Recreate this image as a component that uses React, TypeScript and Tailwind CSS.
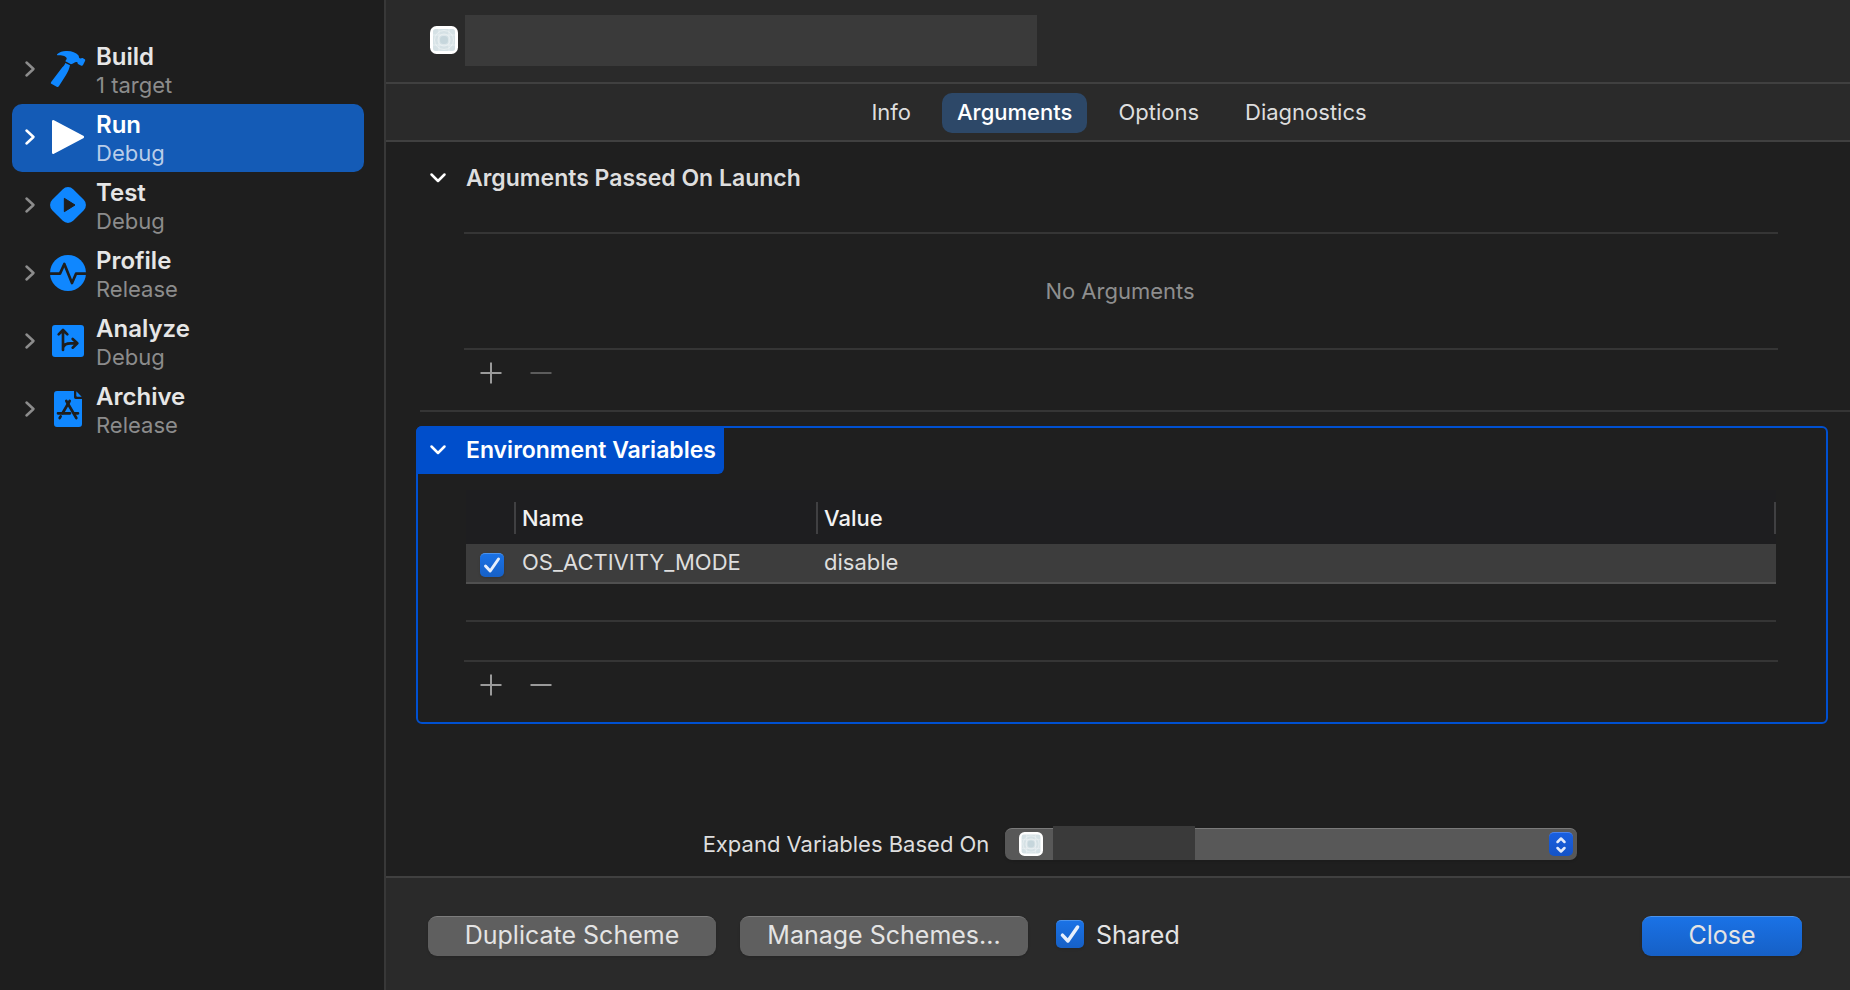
import { useId, type ReactNode } from "react";

const BLUE = "#0f87ff";
const DARK = "#1e1e1e";

function HammerIcon() {
  return (
    <svg viewBox="0 0 108 120" className="h-10 w-9" fill={BLUE} aria-hidden="true">
      <path d="M22 15C30 8 40 5 52 6C66 6 78 11 85 19C87 22 86 26 89 28C93 29 96 26 99 28L104 31C106 32 106 34 105 36L99 48C98 50 96 51 94 50L84 45C82 43 84 40 80 39C75 38 70 44 63 46L46 37C47 34 51 31 50 28C48 21 36 18 24 19C21 19 20 17 22 15Z" />
      <path d="M46 42L60 49C58 60 54 68 48 78L27 111C25 114 23 115 20 113L4 104C2 103 2 101 4 98L37 55C42 50 44 47 46 42Z" />
    </svg>
  );
}

function PlayIcon() {
  return (
    <svg viewBox="0 0 96 102" className="h-[34px] w-8" aria-hidden="true">
      <path d="M4 4L92 51L4 98Z" fill="white" stroke="white" strokeWidth="8" strokeLinejoin="round" />
    </svg>
  );
}

function TestIcon() {
  return (
    <svg viewBox="0 0 108 108" className="size-9" aria-hidden="true">
      <rect x="9.5" y="9.5" width="89" height="89" rx="22" fill={BLUE} transform="rotate(45 54 54)" />
      <path d="M43 34L75 54L43 74Z" fill={DARK} stroke={DARK} strokeWidth="3" strokeLinejoin="round" />
    </svg>
  );
}

function ProfileIcon() {
  return (
    <svg viewBox="0 0 108 108" className="size-9" aria-hidden="true">
      <circle cx="54" cy="54" r="54" fill={BLUE} />
      <path d="M0 56H30L43 27L66 84L78 56H108" fill="none" stroke={DARK} strokeWidth="8" strokeLinejoin="round" />
    </svg>
  );
}

function AnalyzeIcon() {
  return (
    <svg viewBox="0 0 96 96" className="size-8" aria-hidden="true">
      <rect width="96" height="96" rx="9" fill={BLUE} />
      <path
        d="M33 75V17M20 28L33 15L46 28M33 68C36 58 44 55 56 55H75M62 42L76 55L62 68"
        fill="none"
        stroke={DARK}
        strokeWidth="8"
        strokeLinecap="round"
        strokeLinejoin="round"
      />
    </svg>
  );
}

function ArchiveIcon() {
  return (
    <svg viewBox="0 0 84 108" className="h-9 w-7" aria-hidden="true">
      <path d="M9 0H60V19Q60 24 65 24H84V99Q84 108 75 108H9Q0 108 0 99V9Q0 0 9 0Z" fill={BLUE} />
      <path d="M67 1L83 17H70Q67 17 67 14Z" fill={BLUE} />
      <g fill="none" stroke={DARK} strokeWidth="8" strokeLinecap="round">
        <path d="M47 30L26 66" />
        <path d="M37 30L67 81" />
        <path d="M12 67H48M60 67H72" />
        <path d="M17 81L20 76" />
      </g>
    </svg>
  );
}

function AppIcon({ className }: { className: string }) {
  return (
    <svg viewBox="0 0 28 28" className={className} aria-hidden="true">
      <rect width="28" height="28" rx="6.5" fill="#ffffff" />
      <rect x="3" y="3" width="22" height="22" rx="2.5" fill="#d5e1e5" />
      <g fill="none" stroke="#eef4f5" strokeWidth="0.7">
        <circle cx="14" cy="14" r="9.5" />
        <circle cx="14" cy="14" r="6" />
        <path d="M3 9H25M3 19H25M9 3V25M19 3V25" />
      </g>
      <circle cx="14" cy="14" r="4" fill="#c6d6dc" />
    </svg>
  );
}

function ChevronRight() {
  return (
    <svg viewBox="0 0 12 18" className="h-[18px] w-3 shrink-0" aria-hidden="true">
      <path d="M2.500 2.500L9.500 9L2.500 15.500" fill="none" stroke="currentColor" strokeWidth="2.500" strokeLinecap="round" strokeLinejoin="round" />
    </svg>
  );
}

function ChevronDown() {
  return (
    <svg viewBox="0 0 18 12" className="h-3 w-[18px] shrink-0" aria-hidden="true">
      <path d="M2.500 2.500L9 9L15.500 2.500" fill="none" stroke="currentColor" strokeWidth="2.500" strokeLinecap="round" strokeLinejoin="round" />
    </svg>
  );
}

type Phase = { name: string; detail: string; icon: ReactNode; selected?: boolean };

const phases: Phase[] = [
  { name: "Build", detail: "1 target", icon: <HammerIcon /> },
  { name: "Run", detail: "Debug", icon: <PlayIcon />, selected: true },
  { name: "Test", detail: "Debug", icon: <TestIcon /> },
  { name: "Profile", detail: "Release", icon: <ProfileIcon /> },
  { name: "Analyze", detail: "Debug", icon: <AnalyzeIcon /> },
  { name: "Archive", detail: "Release", icon: <ArchiveIcon /> },
];

function PhaseRow({ name, detail, icon, selected }: Phase) {
  return (
    <li>
      <button
        type="button"
        aria-current={selected}
        className={
          selected
            ? "flex h-[68px] w-full items-center rounded-[10px] bg-[#145bb6] pl-3 text-left text-white"
            : "flex h-[68px] w-full items-center rounded-[10px] pl-3 text-left text-[#8c8c8c]"
        }
      >
        <span className="flex items-center pb-0.5">
          <ChevronRight />
          <span className="ml-3 flex w-10 shrink-0 justify-center">{icon}</span>
        </span>
        <span className="ml-2 flex flex-col pt-0.5">
          <span className={selected ? "text-2xl leading-7 font-semibold text-white" : "text-2xl leading-7 font-semibold text-[#e6e6e6]"}>
            {name}
          </span>
          <span className={selected ? "text-[22px] leading-7 text-[#b9cde9]" : "text-[22px] leading-7 text-[#8c8c8c]"}>{detail}</span>
        </span>
      </button>
    </li>
  );
}

function Tick({ id, label, large }: { id: string; label?: string; large?: boolean }) {
  return (
    <span className={large ? "relative block size-7" : "relative block size-6"}>
      <input
        id={id}
        type="checkbox"
        defaultChecked
        aria-label={label}
        className="block size-full appearance-none rounded-[5px] border-t border-[#4a92ec] bg-linear-to-b from-[#1a72e6] to-[#1660c6] shadow"
      />
      <svg viewBox="0 0 24 24" className="pointer-events-none absolute inset-0 size-full" aria-hidden="true">
        <path d="M5.500 13L10.200 18L18.500 6" fill="none" stroke="#e6effc" strokeWidth="3" strokeLinecap="round" strokeLinejoin="round" />
      </svg>
    </span>
  );
}

function AddRemove({ canRemove }: { canRemove: boolean }) {
  return (
    <div className="flex gap-7 pt-3 pl-4">
      <button type="button" aria-label="Add" className="block text-[#9a9a9a]">
        <svg viewBox="0 0 22 22" className="size-[22px]" aria-hidden="true">
          <path d="M0.500 11H21.500M11 0.500V21.500" stroke="currentColor" strokeWidth="2" />
        </svg>
      </button>
      <button type="button" aria-label="Remove" disabled={!canRemove} className="block text-[#9a9a9a] disabled:text-[#5c5c5c]">
        <svg viewBox="0 0 22 22" className="size-[22px]" aria-hidden="true">
          <path d="M0.500 11H21.500" stroke="currentColor" strokeWidth="2" />
        </svg>
      </button>
    </div>
  );
}

const tabs = ["Info", "Arguments", "Options", "Diagnostics"];

function ColumnHead({ children }: { children: ReactNode }) {
  return <div className="flex h-8 items-center border-l-2 border-[#404042] pl-1.5">{children}</div>;
}

export default function App() {
  const baseId = useId();
  const expandId = `${baseId}-expand`;
  const sharedId = `${baseId}-shared`;
  const rowId = `${baseId}-row`;

  return (
    <div className="flex min-h-screen bg-[#1f1f1f] font-['Inter',sans-serif] text-[22px] leading-7 text-[#dedede]">
      <aside className="w-[386px] shrink-0 border-r-2 border-[#383838] bg-[#1e1e1e] pt-9 pr-5 pl-3">
        <ul>
          {phases.map((phase) => (
            <PhaseRow key={phase.name} {...phase} />
          ))}
        </ul>
      </aside>

      <div className="flex min-w-0 flex-1 flex-col">
        <header className="flex h-[84px] items-center gap-[7px] border-b-2 border-[#404040] bg-[#2a2a2a] pb-0.5 pl-11">
          <AppIcon className="size-7" />
          <div className="h-[51px] w-[572px] bg-[#3a3a3a]" />
        </header>

        <nav className="flex h-[58px] items-center justify-center gap-4 border-b-2 border-[#404040] bg-[#2a2a2a] pt-0.5 pl-0.5">
          {tabs.map((tab) => (
            <button
              key={tab}
              type="button"
              className={
                tab === "Arguments"
                  ? "h-10 rounded-[10px] bg-[#2d4868] px-[15px] pb-0.5 font-medium text-white"
                  : "h-10 rounded-[10px] px-[15px] pb-0.5 text-[#dedede]"
              }
            >
              {tab}
            </button>
          ))}
        </nav>

        <main className="flex flex-1 flex-col">
          <section className="ml-[34px] border-b-2 border-[#353535]">
            <h2 className="flex h-[90px] items-start pt-[22px] pl-[9px] text-[23px] leading-7 font-semibold">
              <button type="button" className="flex items-center gap-[19px]">
                <span className="text-white">
                  <ChevronDown />
                </span>
                Arguments Passed On Launch
              </button>
            </h2>
            <div className="mr-[72px] ml-11 flex h-[118px] items-center justify-center border-y-2 border-[#353535] pr-0.5 text-[#8e8e8e]">
              No Arguments
            </div>
            <div className="ml-11 h-[60px]">
              <AddRemove canRemove={false} />
            </div>
          </section>

          <section className="mt-3.5 mr-[22px] ml-[30px] h-[298px] rounded-md border-2 border-[#0050d0]">
            <h2 className="flex text-[23px] leading-7 font-semibold text-white">
              <button type="button" className="-mt-0.5 -ml-0.5 flex h-12 items-center gap-[19px] rounded-tl-md rounded-br-md bg-[#004ecb] pr-2 pl-[13px]">
                <ChevronDown />
                Environment Variables
              </button>
            </h2>
            <div className="mt-4 mr-12 ml-[46px] border-b-2 border-[#353535]">
              <div className="mx-0.5 h-[170px]">
                <table className="w-full table-fixed border-collapse text-left">
                  <colgroup>
                    <col className="w-12" />
                    <col className="w-[302px]" />
                    <col />
                  </colgroup>
                  <thead className="bg-[#1e1e20] font-medium text-[#f2f2f2]">
                    <tr className="h-[54px]">
                      <td className="p-0" />
                      <th scope="col" className="p-0 pt-0.5 font-medium">
                        <ColumnHead>Name</ColumnHead>
                      </th>
                      <th scope="col" className="p-0 pt-0.5 font-medium">
                        <div className="border-r-2 border-[#404042]">
                          <ColumnHead>Value</ColumnHead>
                        </div>
                      </th>
                    </tr>
                  </thead>
                  <tbody>
                    <tr className="h-10 bg-[#3d3d3d] shadow-[inset_0_-2px_0_#505050]">
                      <td className="p-0 pt-0.5 pl-3.5">
                        <Tick id={rowId} label="Enable OS_ACTIVITY_MODE" />
                      </td>
                      <td className="p-0 pb-1 pl-2">OS_ACTIVITY_MODE</td>
                      <td className="p-0 pb-1 pl-2">disable</td>
                    </tr>
                    <tr className="h-[38px] shadow-[inset_0_-2px_0_#353535]">
                      <td className="p-0" colSpan={3} />
                    </tr>
                  </tbody>
                </table>
              </div>
            </div>
            <div className="ml-[46px]">
              <AddRemove canRemove />
            </div>
          </section>

          <div className="mt-auto flex items-center justify-center pt-8 pb-4 pl-11">
            <label htmlFor={expandId} className="mr-4">
              Expand Variables Based On
            </label>
            <div className="relative w-[572px]">
              <select
                id={expandId}
                className="block h-8 w-full appearance-none rounded-[7px] border-t border-[#7a7a7a] bg-[#585858] shadow"
              />
              <AppIcon className="pointer-events-none absolute top-1 left-3.5 size-6" />
              <span className="pointer-events-none absolute -top-0.5 bottom-0 left-12 w-[142px] bg-[#3a3a3a]" />
              <span className="pointer-events-none absolute top-1 right-1 flex size-6 items-center justify-center rounded-[5px] border-t border-[#4a82ec] bg-linear-to-b from-[#195fe0] to-[#1453c6]">
                <svg viewBox="0 0 12 18" className="h-[18px] w-3" aria-hidden="true">
                  <path d="M2.500 6L6 2.500L9.500 6M2.500 12L6 15.500L9.500 12" fill="none" stroke="#e3ebfb" strokeWidth="2.500" strokeLinecap="round" strokeLinejoin="round" />
                </svg>
              </span>
            </div>
          </div>
        </main>

        <footer className="flex h-[114px] items-start border-t-2 border-[#404040] bg-[#2a2a2a] pt-[38px] pr-12 pl-[42px] text-[25px] text-[#e4e4e4]">
          <button type="button" className="h-10 w-72 rounded-[9px] border-t border-[#7c7c7c] bg-[#5f5f5f] pb-1 shadow">
            Duplicate Scheme
          </button>
          <button type="button" className="ml-6 h-10 w-72 rounded-[9px] border-t border-[#7c7c7c] bg-[#5f5f5f] pb-1 shadow">
            Manage Schemes...
          </button>
          <div className="ml-7 flex h-9 items-center gap-3">
            <Tick id={sharedId} large />
            <label htmlFor={sharedId} className="pt-0.5">
              Shared
            </label>
          </div>
          <button
            type="button"
            className="ml-auto h-10 w-40 rounded-[9px] border-t border-[#4a92ec] bg-linear-to-b from-[#1a72e6] to-[#1660c6] pb-1 shadow"
          >
            Close
          </button>
        </footer>
      </div>
    </div>
  );
}
